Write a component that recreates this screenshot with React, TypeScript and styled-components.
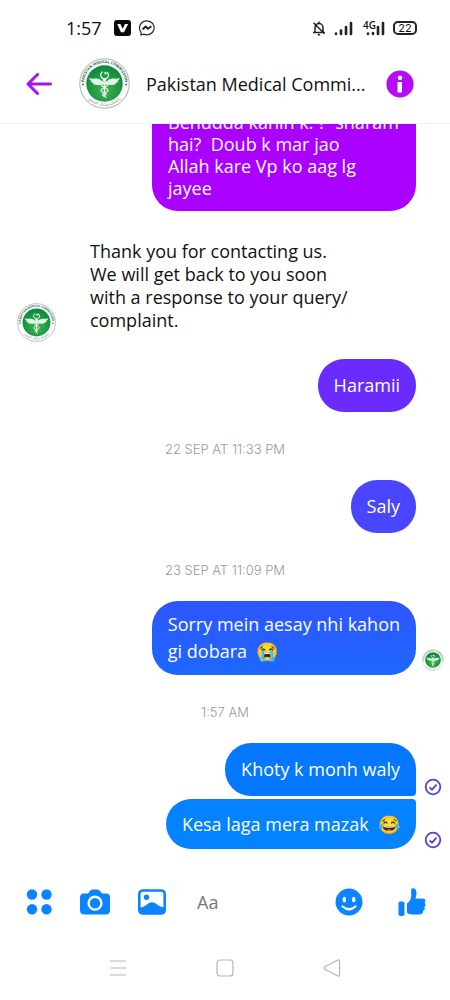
import React, { useId } from 'react';
import styled, { createGlobalStyle } from 'styled-components';

const GlobalStyle = createGlobalStyle`
  * { box-sizing: border-box; }
  body {
    margin: 0;
    background: #fff;
    color: #111;
    font-family: 'Open Sans', 'Noto Sans', sans-serif;
    font-size: 18px;
  }
  button {
    display: flex;
    align-items: center;
    justify-content: center;
    padding: 0;
    border: 0;
    background: none;
    cursor: pointer;
  }
  svg { display: block; flex: none; }
`;

const Screen = styled.div`
  display: flex;
  flex-direction: column;
  height: 100vh;
  overflow: hidden;
`;

const StatusBar = styled.div`
  display: flex;
  align-items: center;
  justify-content: space-between;
  padding: 12px 33px 0 66px;
  height: 44px;
  flex: none;
`;

const StatusGroup = styled.div`
  display: flex;
  align-items: center;
  gap: 8px;
`;

const Clock = styled.time`
  margin-right: 4px;
  font-size: 18px;
  line-height: 24px;
`;

const Battery = styled.span`
  width: 24px;
  height: 14px;
  border: 2px solid #222;
  border-radius: 5px;
  font: 11px/10px Inter, sans-serif;
  text-align: center;
`;

const Header = styled.header`
  display: flex;
  align-items: center;
  padding: 0 36px 0 26px;
  height: 80px;
  flex: none;
  border-bottom: 1px solid #f1f1f1;
`;

const Title = styled.h1`
  flex: 1;
  margin: 0 0 0 16px;
  font-size: 18px;
  font-weight: 400;
  line-height: 24px;
  white-space: nowrap;
`;

const BackButton = styled.button`
  margin-right: 27px;
`;

const Thread = styled.main`
  display: flex;
  flex: 1;
  flex-direction: column;
  justify-content: flex-end;
  min-height: 0;
  padding-bottom: 19px;
  overflow: hidden;
`;

const Incoming = styled.div`
  display: flex;
  flex: none;
  align-items: flex-end;
  gap: 34px;
  margin: 29px 34px 17px 17px;
`;

const IncomingText = styled.p`
  margin: 0 0 10px;
  line-height: 23px;
  white-space: pre-line;
`;

const Outgoing = styled.div<{ $gap?: number }>`
  display: flex;
  flex: none;
  align-items: flex-end;
  justify-content: flex-end;
  margin-bottom: ${(p) => p.$gap ?? 0}px;
`;

type Join = 'none' | 'below' | 'above';

const corners: Record<Join, string> = {
  none: '26px',
  below: '26px 26px 4px 26px',
  above: '26px 4px 26px 26px',
};

const Bubble = styled.p<{ $color: string; $join?: Join; $wide?: boolean; $pad?: number; $leading?: number }>`
  min-width: ${(p) => (p.$wide ? '264px' : '0')};
  margin: 0;
  padding: ${(p) => p.$pad ?? 13}px 16px;
  border-radius: ${(p) => corners[p.$join ?? 'none']};
  background: ${(p) => p.$color};
  color: #fff;
  line-height: ${(p) => p.$leading ?? 27}px;
  white-space: pre;
`;

const Receipt = styled.div<{ $lift?: number }>`
  display: flex;
  justify-content: center;
  width: 34px;
  padding-bottom: ${(p) => p.$lift ?? 0}px;
`;

const Stamp = styled.time`
  display: block;
  flex: none;
  margin: 27px 0 21px;
  color: #999;
  font: 300 13px/20px Inter, sans-serif;
  text-align: center;
`;

const Composer = styled.form`
  display: flex;
  flex: none;
  align-items: center;
  height: 67px;
  padding: 0 23px 0 26px;
  gap: 28px;
`;

const MessageInput = styled.input`
  flex: 1;
  min-width: 0;
  padding: 0 0 0 3px;
  border: 0;
  outline: 0;
  background: none;
  font: 18px/24px 'Open Sans', sans-serif;
  &::placeholder { color: #77777c; opacity: 1; }
`;

const LikeButton = styled.button`
  margin-left: 6px;
`;

const SystemNav = styled.nav`
  display: flex;
  flex: none;
  align-items: center;
  justify-content: center;
  gap: 89px;
  height: 65px;
`;

const BLUE = '#0a84ff';

function Seal({ size }: { size: number }) {
  const id = useId();
  return (
    <svg width={size} height={size} viewBox="0 0 52 52" role="img" aria-label="Pakistan Medical Commission">
      <defs>
        <radialGradient id={`${id}g`} cx="50%" cy="65%" r="60%">
          <stop offset="0" stopColor="#3fb54e" />
          <stop offset="1" stopColor="#0b8a3d" />
        </radialGradient>
        <path id={`${id}t`} d="M7 35 A21 21 0 1 1 45 35" />
        <path id={`${id}b`} d="M10 42 A23 23 0 0 0 42 42" />
      </defs>
      <circle cx="26" cy="26" r="25.2" fill="#fff" stroke="#9db5a4" strokeWidth="1" />
      <circle cx="26" cy="26" r="18.6" fill={`url(#${id}g)`} />
      <text fontFamily="Open Sans, sans-serif" fontSize="3.8" fontWeight="700" fill="#235c3a">
        <textPath href={`#${id}t`} startOffset="50%" textAnchor="middle">PAKISTAN MEDICAL COMMISSION</textPath>
      </text>
      <text fontFamily="DejaVu Sans, sans-serif" fontSize="3.6" fill="#4c7a5d">
        <textPath href={`#${id}b`} startOffset="50%" textAnchor="middle">پاکستان میڈیکل کمیشن</textPath>
      </text>
      <g fill="none" stroke="#e9f8ec" strokeLinecap="round">
        <path d="M29 14.600a4 4 0 1 1-5.400-.4" strokeWidth="1.300" />
        <path d="M26 22v17" strokeWidth="1.600" />
        <path d="M22.600 27c0 3 7 3 7 6s-5.600 2.500-5.600 4.500 3.500 1.500 3.500 3M29.400 27c0 3-7 3-7 6s5.600 2.500 5.600 4.500" strokeWidth="1.200" />
      </g>
      <path d="M27 13.500l.6 1.200 1.300.1-1 .9.3 1.300-1.200-.7-1.200.7.3-1.300-1-.9 1.300-.1z" fill="#fff" />
      <path
        d="M26 24.500c-2.500-.5-4-3-7-3.400-3-.4-6 .6-8.800-.8.600 2 2 2.800 3.200 3.200-.6.200-1 .1-1.600 0 .8 1.500 2 2.100 3.600 2.200-.3.300-.8.500-1.200.5 3 2 7.800 1.300 11.800.8 4 .5 8.800 1.200 11.800-.8-.4 0-.9-.2-1.200-.5 1.600-.1 2.800-.7 3.600-2.200-.6.1-1 .2-1.600 0 1.200-.4 2.600-1.200 3.200-3.200-2.800 1.400-5.800.4-8.800.8-3 .4-4.500 2.900-7 3.400z"
        fill="#e4f5e8"
      />
      <circle cx="26" cy="22.500" r="1.700" fill="#fff" />
      <circle cx="4" cy="27" r=".9" fill="#235c3a" />
      <circle cx="48" cy="27" r=".9" fill="#235c3a" />
    </svg>
  );
}

const Signal = ({ short }: { short?: boolean }) => (
  <svg width="19" height="15" viewBox="0 0 19 15" stroke="#222" strokeWidth="2.600" strokeLinecap="round" aria-hidden>
    <path d={short ? 'M2 12.500v.5M7 12v1M12 6v7M17 2v11' : 'M2 12.500v.5M7 9.500v3.500M12 6v7M17 2v11'} />
  </svg>
);

const FourG = styled.span`
  position: relative;
  margin-left: 2px;
  padding-left: 3px;
`;

const NetworkLabel = styled.span`
  position: absolute;
  top: -1px;
  left: 0;
  background: #fff;
  font: 600 10px/10px 'Open Sans', sans-serif;
`;

const SentCheck = () => (
  <svg width="18" height="18" viewBox="0 0 18 18" fill="none" stroke="#5b3fd0" strokeWidth="1.800" role="img" aria-label="Sent">
    <circle cx="9" cy="9" r="7.300" />
    <path d="M5.600 9.300l2.400 2.300 4.500-4.900" />
  </svg>
);

export default function App() {
  return (
    <Screen>
      <GlobalStyle />
      <StatusBar>
        <StatusGroup>
          <Clock>1:57</Clock>
          <svg width="17" height="16" viewBox="0 0 17 16" aria-hidden>
            <rect width="17" height="16" rx="3" fill="#0a0a0a" />
            <path d="M3.200 4h3.200l2.300 4.800L11 4h3.200l-4.300 8.300H7z" fill="#fff" />
          </svg>
          <svg width="16" height="16" viewBox="0 0 16 16" fill="none" stroke="#222" aria-hidden>
            <path d="M8 .8a7.200 7 0 1 1-3.200 13.300L2 15v-3A7.200 7 0 0 1 8 .8z" strokeWidth="1.200" />
            <path d="M3.600 9.500l3-3 2.400 2.300 3.400-2.500" strokeWidth="1.900" strokeLinejoin="round" />
          </svg>
        </StatusGroup>
        <StatusGroup>
          <svg width="14" height="15" viewBox="0 0 14 15" fill="none" stroke="#222" strokeWidth="1.500" aria-hidden>
            <path d="M7 .5v1.500M3 11.500V6.500a4 4 0 0 1 8 0v5M1 11.500h12M5.800 13.800h2.400M1.500 1.800l11 11" />
          </svg>
          <Signal />
          <FourG>
            <Signal short />
            <NetworkLabel>4G</NetworkLabel>
          </FourG>
          <Battery>22</Battery>
        </StatusGroup>
      </StatusBar>

      <Header>
        <BackButton type="button" aria-label="Back">
          <svg width="26" height="22" viewBox="0 0 26 22" fill="none" stroke="#a614f5" strokeWidth="3" strokeLinecap="round" strokeLinejoin="round">
            <path d="M24.500 11H2.500M11.500 1.500L2 11l9.500 9.500" />
          </svg>
        </BackButton>
        <Seal size={51} />
        <Title>Pakistan Medical Commi...</Title>
        <button type="button" aria-label="Conversation information">
          <svg width="28" height="28" viewBox="0 0 28 28">
            <circle cx="14" cy="14" r="13.600" fill="#b50cf8" />
            <circle cx="14" cy="7.800" r="2.300" fill="#fff" />
            <path d="M11.500 12h4.500v10.500h-4.500z" fill="#fff" />
          </svg>
        </button>
      </Header>

      <Thread>
        <Outgoing>
          <Bubble $color="#a900ff" $pad={12} $leading={22} $wide>
            {'Behudda kahin k. ?  sharam\nhai?  Doub k mar jao\nAllah kare Vp ko aag lg\njayee'}
          </Bubble>
          <Receipt />
        </Outgoing>

        <Incoming>
          <Seal size={39} />
          <IncomingText>
            {'Thank you for contacting us.\nWe will get back to you soon\nwith a response to your query/\ncomplaint.'}
          </IncomingText>
        </Incoming>

        <Outgoing>
          <Bubble $color="#6a2bff">Haramii</Bubble>
          <Receipt />
        </Outgoing>
        <Stamp>22 SEP AT 11:33 PM</Stamp>
        <Outgoing>
          <Bubble $color="#4a45ff">Saly</Bubble>
          <Receipt />
        </Outgoing>
        <Stamp>23 SEP AT 11:09 PM</Stamp>
        <Outgoing>
          <Bubble $color="linear-gradient(#2f55ff, #1c68ff)" $pad={10} $wide>
            {'Sorry mein aesay nhi kahon\ngi dobara  😭'}
          </Bubble>
          <Receipt $lift={4}>
            <Seal size={22} />
          </Receipt>
        </Outgoing>
        <Stamp>1:57 AM</Stamp>
        <Outgoing $gap={3}>
          <Bubble $color="#0578ff" $join="below">Khoty k monh waly</Bubble>
          <Receipt>
            <SentCheck />
          </Receipt>
        </Outgoing>
        <Outgoing>
          <Bubble $color="#0582ff" $join="above" $pad={12} $leading={26}>{'Kesa laga mera mazak  😂'}</Bubble>
          <Receipt>
            <SentCheck />
          </Receipt>
        </Outgoing>
      </Thread>

      <Composer onSubmit={(e) => e.preventDefault()}>
        <button type="button" aria-label="More actions">
          <svg width="26" height="26" viewBox="0 0 26 26" fill={BLUE}>
            <circle cx="6" cy="5.500" r="5.200" />
            <circle cx="20.500" cy="5.500" r="5.200" />
            <circle cx="6" cy="20.300" r="5.200" />
            <circle cx="20.500" cy="20.300" r="5.200" />
          </svg>
        </button>
        <button type="button" aria-label="Camera">
          <svg width="30" height="26" viewBox="0 0 30 26">
            <path d="M4 4.500h4l2.200-2.800Q11.300.5 13 .5h4q1.700 0 2.800 1.200L22 4.500h4q4 0 4 4V21q0 4.500-4.500 4.500h-21Q0 25.500 0 21V8.500q0-4 4-4z" fill={BLUE} />
            <circle cx="15" cy="14.200" r="6.400" fill={BLUE} stroke="#fff" strokeWidth="2.400" />
          </svg>
        </button>
        <button type="button" aria-label="Gallery">
          <svg width="28" height="26" viewBox="0 0 28 26">
            <rect x="1.300" y="1.500" width="25.400" height="23" rx="3.500" fill="#fff" stroke={BLUE} strokeWidth="2.600" />
            <circle cx="8.500" cy="8.300" r="2.700" fill={BLUE} />
            <path d="M2 18.500c2-.2 4.500-1 7-3 3.500-3 6.500-3 10 0 2.500 2 4.500 2.500 7 3v5q0 1-2 1H4q-2 0-2-1z" fill={BLUE} />
          </svg>
        </button>
        <MessageInput aria-label="Message" placeholder="Aa" />
        <button type="button" aria-label="Emoji">
          <svg width="28" height="28" viewBox="0 0 28 28">
            <circle cx="14" cy="14" r="13.500" fill={BLUE} />
            <ellipse cx="9.300" cy="11.500" rx="1.800" ry="2.800" fill="#fff" />
            <ellipse cx="18.700" cy="11.500" rx="1.800" ry="2.800" fill="#fff" />
            <path d="M7.500 18.500q6.500 5.500 13 0" fill="none" stroke="#fff" strokeWidth="2.200" strokeLinecap="round" />
          </svg>
        </button>
        <LikeButton type="button" aria-label="Send a like">
          <svg width="30" height="30" viewBox="0 0 30 30" fill={BLUE}>
            <rect x="1.500" y="14.500" width="6" height="14.500" rx="1.800" />
            <path d="M10 16.500c2-1.500 4.200-4 4.200-7.500V3c0-2.600 5.300-2.800 5.300 3 0 2-.6 4-1 5.500h7.300c2.800 0 3.300 3 1.700 4.300 1.700 1.200 1.300 3.500-.2 4.200 1 1.400.4 3.300-1.200 3.800.4 2.400-1.300 3.700-3.600 3.700H17c-3 0-7-.5-7-2.500z" />
          </svg>
        </LikeButton>
      </Composer>

      <SystemNav aria-label="System">
        <button type="button" aria-label="Recent apps">
          <svg width="18" height="18" viewBox="0 0 18 18" stroke="#b5b5b5" strokeWidth="1.200">
            <path d="M1 2h16M1 9h16M1 16h16" />
          </svg>
        </button>
        <button type="button" aria-label="Home">
          <svg width="18" height="18" viewBox="0 0 18 18" fill="none" stroke="#b5b5b5" strokeWidth="1.200">
            <rect x="1" y="1" width="16" height="16" rx="3" />
          </svg>
        </button>
        <button type="button" aria-label="Go back">
          <svg width="18" height="18" viewBox="0 0 18 18" fill="none" stroke="#b5b5b5" strokeWidth="1.200" strokeLinejoin="round">
            <path d="M1.500 8q-1 1 0 2l13.500 7q1.500.7 1.500-1V2q0-1.700-1.500-1z" />
          </svg>
        </button>
      </SystemNav>
    </Screen>
  );
}
